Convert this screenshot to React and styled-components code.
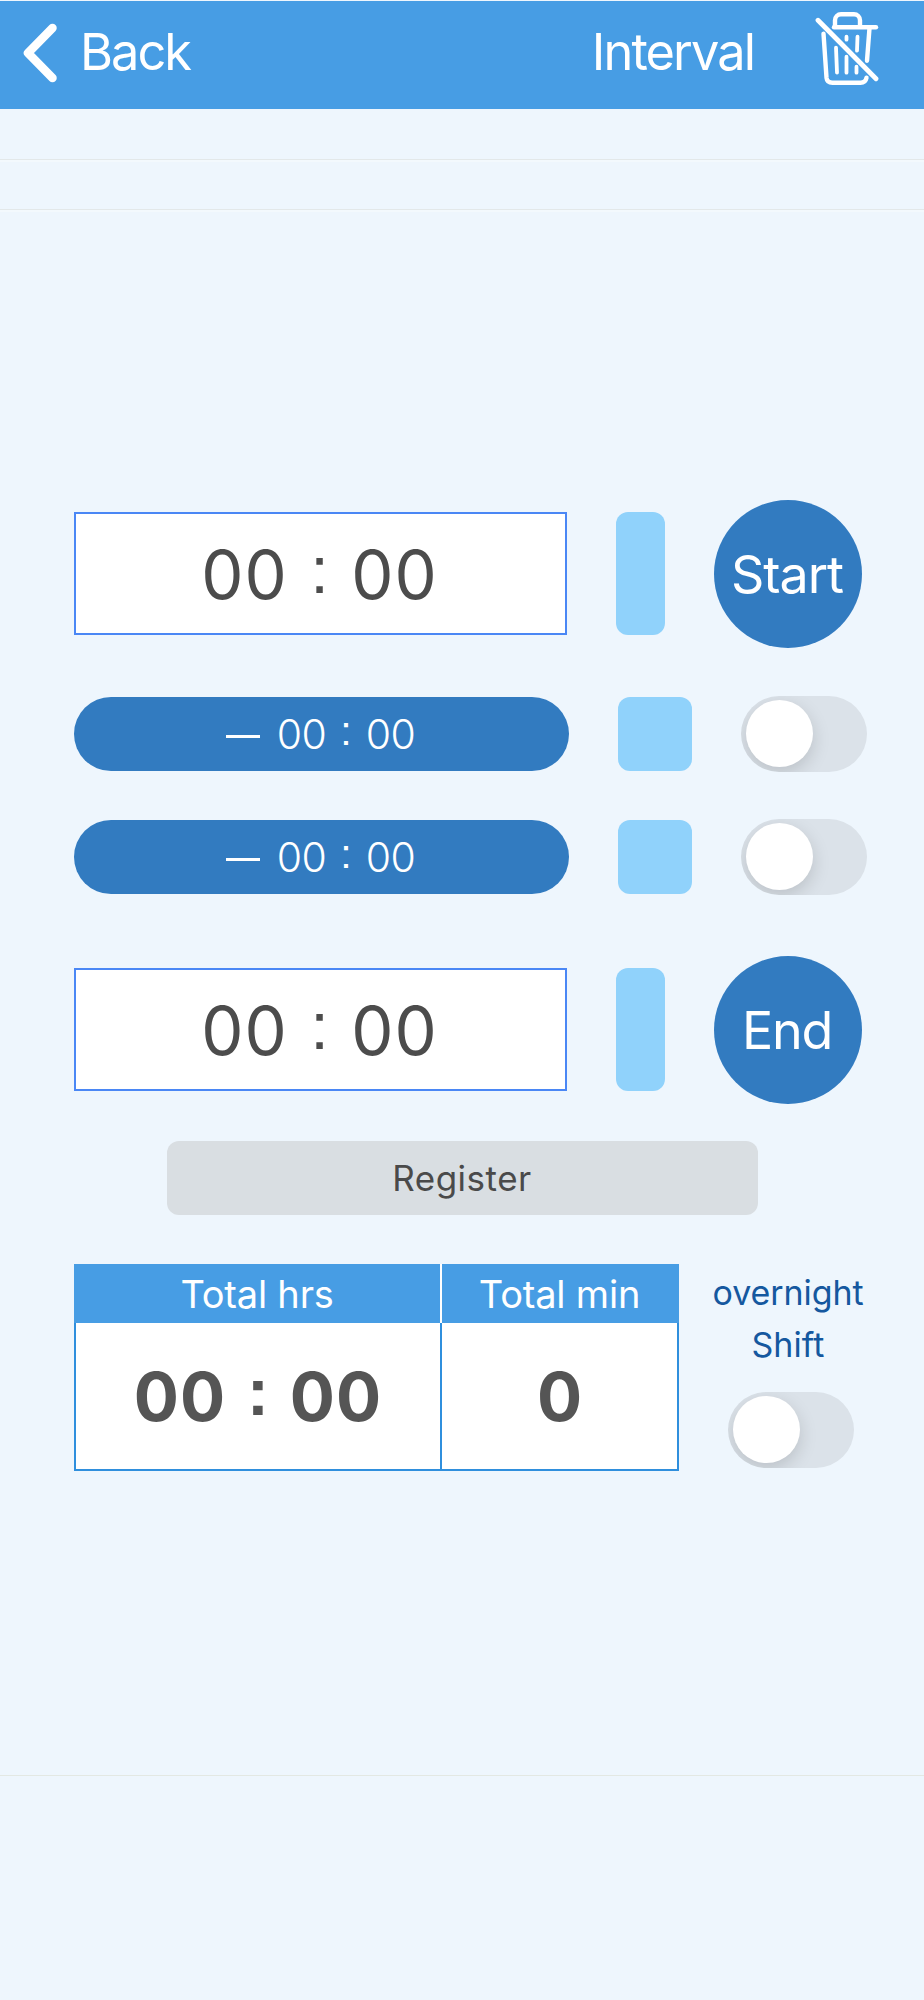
import React, { useState } from 'react'
import styled, { createGlobalStyle } from 'styled-components'


const GlobalStyle = createGlobalStyle`
    * {
        box-sizing: border-box;
    }

    body {
        margin: 0;
        background-color: #eef6fd;
        font-family: Inter, "Liberation Sans", sans-serif;
    }

    button {
        border: 0;
        padding: 0;
        font: inherit;
    }
`

const Screen = styled.div`
    width: 924px;
    height: 2000px;
    padding-top: 1px;
    overflow: hidden;
    background-color: #eef6fd;
`

const Header = styled.header`
    display: flex;
    align-items: center;
    height: 108px;
    padding: 0 45px 5px 23px;
    color: #fff;
    background-color: #479de4;
`

const BackButton = styled.button`
    display: flex;
    align-items: center;
    gap: 22px;
    color: inherit;
    background: none;
`

const HeaderText = styled.span`
    font-size: 50.5px;
    line-height: 58px;
    margin-top: -1px;
    letter-spacing: ${props => props.$spacing};
`

const Title = styled.div`
    display: flex;
    align-items: center;
    margin-left: auto;
    gap: 61px;
`

const Strip = styled.div`
    height: ${props => props.$height}px;
    border-bottom: 1px solid #e3e8e9;
    box-shadow: 0 2px 0 #f3f9fd;
`

const Form = styled.main`
    display: flex;
    flex-direction: column;
    height: 1566px;
    padding: 289px 0 0 74px;
    border-bottom: 1px solid #e3e8e3;
`

const Row = styled.div`
    display: flex;
    align-items: center;
    height: ${props => props.$height}px;
    margin-bottom: ${props => props.$gap}px;
`

const TimeBox = styled.div`
    width: 493px;
    height: 123px;
    padding: 3px 2px 0 0;
    display: flex;
    align-items: center;
    justify-content: center;
    border: 2px solid #4a87f5;
    background-color: #fff;
`

const Clock = styled.div`
    display: grid;
    grid-template-columns: ${props => props.$columns};
    align-items: start;
    justify-items: center;
    font-size: ${props => props.$size}px;
    font-weight: ${props => props.$weight || 400};
    line-height: 1.2;
    letter-spacing: ${props => props.$spacing || 0};
    white-space: nowrap;
    color: ${props => props.$color || '#4c4c4c'};
`

/* square dots, lifted to the middle of the digits */
const Colon = styled.span`
    margin-top: -0.07em;
    font-family: "Liberation Sans", Arial, sans-serif;
    letter-spacing: 0;
`

const BreakPill = styled.div`
    width: 495px;
    height: 74px;
    padding: 1px 1px 0 0;
    display: flex;
    align-items: center;
    justify-content: center;
    gap: 16px;
    border-radius: 37px;
    background-color: #327bc0;
`

const Minus = styled.span`
    width: 34px;
    height: 3px;
    margin-top: 3px;
    background-color: #fff;
`

const Swatch = styled.div`
    width: ${props => props.$width}px;
    height: ${props => props.$height}px;
    margin: 0 49px;
    border-radius: 12px;
    background-color: #90d2fb;
`

const RoundButton = styled.button`
    width: 148px;
    height: 148px;
    padding: 1px 2px 0 0;
    border-radius: 50%;
    font-size: 52px;
    letter-spacing: ${props => props.$spacing};
    color: #fff;
    background-color: #327bc0;
`

const SwitchTrack = styled.button`
    flex: none;
    width: 126px;
    height: 76px;
    padding: 4px 5px 5px;
    display: flex;
    justify-content: ${props => props.$on ? 'flex-end' : 'flex-start'};
    overflow: hidden;
    border-radius: 38px;
    background-color: ${props => props.$on ? '#479de4' : '#dbe2e9'};
`

const SwitchKnob = styled.span`
    width: 67px;
    height: 67px;
    border-radius: 50%;
    background-color: #fff;
    box-shadow: 0 6px 18px rgba(0, 0, 0, 0.15);
`

const RegisterButton = styled.button`
    width: 591px;
    height: 74px;
    margin-left: 93px;
    padding-right: 1px;
    border-radius: 12px;
    font-size: 35px;
    letter-spacing: 0.5px;
    color: #4a4a4a;
    background-color: #d9dee2;
`

const Summary = styled.div`
    display: flex;
    align-items: flex-start;
    margin-top: 49px;
`

const Totals = styled.div`
    display: grid;
    grid-template-columns: 366px 237px;
    column-gap: 2px;
    width: 605px;
    height: 207px;
    background-color: #fff;
`

const TotalColumn = styled.section`
    display: flex;
    flex-direction: column;
`

const TotalHead = styled.div`
    height: 59px;
    font-size: 38px;
    line-height: 61px;
    letter-spacing: -0.2px;
    padding-right: ${props => props.$inset || 0}px;
    text-align: center;
    color: #fff;
    background-color: #479de4;
`

const TotalValue = styled.div`
    flex: 1;
    display: flex;
    align-items: center;
    justify-content: center;
    padding-top: 2px;
    border: solid #2f8fdd;
    border-width: 0 2px 2px ${props => props.$first ? '2px' : '0'};
    margin-right: ${props => props.$first ? '-2px' : '0'};
`

const Overnight = styled.div`
    display: flex;
    flex-direction: column;
    align-items: center;
    width: 150px;
    margin-left: 34px;
    padding-top: 3px;
    font-size: 34px;
    line-height: 52px;
    color: #15589f;
`

const OvernightLine = styled.span`
    letter-spacing: ${props => props.$spacing};
`

const OvernightSwitch = styled.div`
    display: flex;
    margin: 21px 0 0 5px;
`

const BackIcon = () => (
    <svg width="35" height="60" viewBox="0 0 35 60" fill="none" stroke="#fff" strokeWidth="8.5" strokeLinecap="round" strokeLinejoin="round">
        <path d="M29.5 5 5 30l24.500 25" />
    </svg>
)

const TrashOffIcon = () => (
    <svg width="64" height="84" viewBox="0 0.3 64 84" fill="none" stroke="#fff" strokeWidth="4.400" strokeLinecap="round" strokeLinejoin="round">
        <path d="M20 16V9.500a6 6 0 0 1 6-6h13a6 6 0 0 1 6 6V16" />
        <path d="M19 16.500H61" />
        <path d="M8.500 23l3 44q.5 5 6 5h28q5 0 6-5" />
        <path d="M54.500 17.500L52 50" />
        <path d="M21 37l1 25M31.500 26v3M31.500 46v16M42.500 26l-.5 14M41.500 56v6" strokeWidth="3.800" />
        <path d="M3 9.500 61 68" strokeWidth="4.800" />
    </svg>
)

const Switch = ({label}) => {

    const [on, setOn] = useState(false)

  return (
    <SwitchTrack role="switch" aria-checked={on} aria-label={label} $on={on} onClick={() => setOn(!on)}>
        <SwitchKnob />
    </SwitchTrack>
  )
}

const Time = ({hours = '00', minutes = '00', ...rest}) => (
    <Clock {...rest}>
        <span>{hours}</span>
        <Colon>:</Colon>
        <span>{minutes}</span>
    </Clock>
)

const PunchRow = ({label, spacing, gap}) => (
    <Row $height={149} $gap={gap}>
        <TimeBox>
            <Time $size={67} $spacing="1px" $columns="90px 60px 90px" />
        </TimeBox>
        <Swatch $width={49} $height={123} />
        <RoundButton $spacing={spacing}>{label}</RoundButton>
    </Row>
)

const BreakRow = ({label, gap}) => (
    <Row $height={76} $gap={gap}>
        <BreakPill>
            <Minus />
            <Time $size={41} $weight={350} $spacing="-0.5px" $columns="52px 37px 52px" $color="#fff" />
        </BreakPill>
        <Swatch $width={74} $height={74} />
        <Switch label={label} />
    </Row>
)

const App = () => {
  return (
    <Screen>
        <GlobalStyle />
        <Header>
            <BackButton>
                <BackIcon />
                <HeaderText $spacing="-2px">Back</HeaderText>
            </BackButton>
            <Title>
                <HeaderText $spacing="-1.9px">Interval</HeaderText>
                <TrashOffIcon />
            </Title>
        </Header>
        <Strip $height={51} />
        <Strip $height={50} />
        <Form>
            <PunchRow label="Start" spacing="-1px" gap={48} />
            <BreakRow label="First break" gap={47} />
            <BreakRow label="Second break" gap={60} />
            <PunchRow label="End" spacing="-1.2px" gap={37} />
            <RegisterButton>Register</RegisterButton>
            <Summary>
                <Totals>
                    <TotalColumn>
                        <TotalHead>Total hrs</TotalHead>
                        <TotalValue $first>
                            <Time $size={67} $weight={700} $spacing="1px" $columns="90px 66px 90px" $color="#555" />
                        </TotalValue>
                    </TotalColumn>
                    <TotalColumn>
                        <TotalHead $inset={2}>Total min</TotalHead>
                        <TotalValue>
                            <Clock $size={67} $weight={700} $color="#555">0</Clock>
                        </TotalValue>
                    </TotalColumn>
                </Totals>
                <Overnight>
                    <OvernightLine $spacing="-0.1px">overnight</OvernightLine>
                    <OvernightLine $spacing="0.1px">Shift</OvernightLine>
                    <OvernightSwitch>
                        <Switch label="Overnight shift" />
                    </OvernightSwitch>
                </Overnight>
            </Summary>
        </Form>
    </Screen>
  )
}

export default App
